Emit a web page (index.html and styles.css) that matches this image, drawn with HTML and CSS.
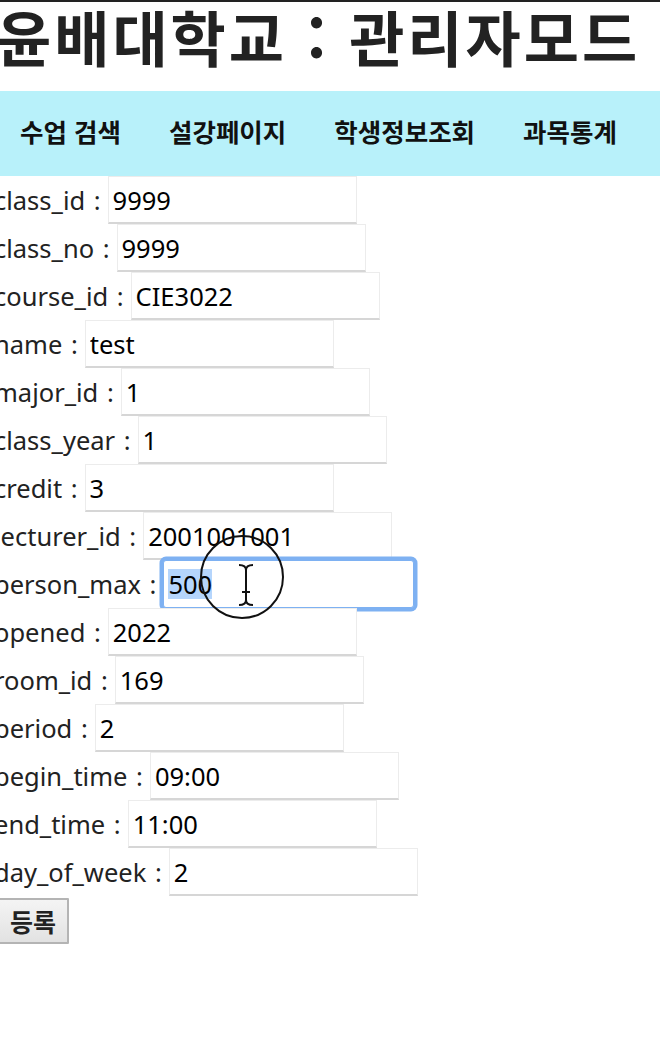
FILE: index.html
```html
<!DOCTYPE html>
<html lang="ko">
<head>
<meta charset="utf-8">
<title>윤배대학교 : 관리자모드</title>
<link rel="stylesheet" href="styles.css">
</head>
<body>
<div class="page">
  <h1 class="title">윤배대학교 : 관리자모드</h1>
  <nav class="nav">
    <a class="nav-item">수업 검색</a>
    <a class="nav-item">설강페이지</a>
    <a class="nav-item">학생정보조회</a>
    <a class="nav-item">과목통계</a>
  </nav>
  <form class="form">
    <div class="row"><label class="label">class_id :</label><input class="field" value="9999"></div>
    <div class="row"><label class="label">class_no :</label><input class="field" value="9999"></div>
    <div class="row"><label class="label">course_id :</label><input class="field" value="CIE3022"></div>
    <div class="row"><label class="label">name :</label><input class="field" value="test"></div>
    <div class="row"><label class="label">major_id :</label><input class="field" value="1"></div>
    <div class="row"><label class="label">class_year :</label><input class="field" value="1"></div>
    <div class="row"><label class="label">credit :</label><input class="field" value="3"></div>
    <div class="row"><label class="label">lecturer_id :</label><input class="field" value="2001001001"></div>
    <div class="row"><label class="label">person_max :</label><div class="field focused"><span class="sel">500</span></div></div>
    <div class="row"><label class="label">opened :</label><input class="field over" value="2022"></div>
    <div class="row"><label class="label">room_id :</label><input class="field" value="169"></div>
    <div class="row"><label class="label">period :</label><input class="field" value="2"></div>
    <div class="row"><label class="label">begin_time :</label><input class="field" value="09:00"></div>
    <div class="row"><label class="label">end_time :</label><input class="field" value="11:00"></div>
    <div class="row"><label class="label">day_of_week :</label><input class="field" value="2"></div>
    <button type="button" class="submit">등록</button>
  </form>
  <svg class="cursor-lens" width="86" height="86" viewBox="0 0 86 86">
    <circle cx="43" cy="43" r="41" fill="none" stroke="#111" stroke-width="2"/>
    <path d="M40 31 q7 0 7 5 q0 -5 7 -5 M47 36 V66 M40 71 q7 0 7 -5 q0 5 7 5 M43 58 H51" fill="none" stroke="#111" stroke-width="2"/>
  </svg>
</div>
</body>
</html>
```
FILE: styles.css
```css
* { box-sizing: border-box; }
html, body { margin: 0; padding: 0; background: #fff; }
body {
  font-family: "Noto Sans", "Noto Sans CJK KR", sans-serif;
  color: #222;
  overflow: hidden;
}
.page {
  position: relative;
  width: 660px;
  height: 1056px;
  border-top: 2px solid #222;
  overflow: hidden;
}
.title {
  margin: 0 0 0 -4px;
  height: 89px;
  font-family: "Noto Sans CJK KR", sans-serif;
  font-size: 60px;
  font-weight: 700;
  line-height: 68px;
  letter-spacing: 3px;
  white-space: nowrap;
  color: #222;
}
.nav {
  display: flex;
  align-items: center;
  gap: 48px;
  height: 85px;
  padding: 0 0 6px 20px;
  background: #b8f1fa;
}
.nav-item {
  font-family: "Noto Sans CJK KR", sans-serif;
  font-size: 25.5px;
  font-weight: 700;
  color: #111;
  white-space: nowrap;
}
.form {
  margin-left: -6px;
  display: flex;
  flex-direction: column;
  align-items: flex-start;
}
.row {
  display: flex;
  align-items: center;
  height: 48px;
  white-space: nowrap;
}
.label {
  font-size: 25.5px;
  color: #222;
  padding-right: 7px;
  word-spacing: 2px;
}
.field {
  width: 249px;
  height: 48px;
  padding: 0 4px;
  border: 1px solid #ececec;
  border-bottom: 2px solid #d6d6d6;
  background: #fff;
  font-family: "Noto Sans", "Noto Sans CJK KR", sans-serif;
  font-size: 25.5px;
  color: #000;
  display: flex;
  align-items: center;
}
.over { position: relative; }
.focused {
  width: 251px;
  border: 1px solid #7eb1f2;
  box-shadow: 0 0 0 3.5px #7eb1f2;
  border-radius: 3px;
}
.sel {
  background: #b5d5fc;
  line-height: 30px;
}
.submit {
  margin-top: 2px;
  margin-left: 3px;
  height: 46px;
  padding: 0 11px;
  font-family: "Noto Sans CJK KR", sans-serif;
  font-size: 25px;
  font-weight: 700;
  color: #222;
  background: linear-gradient(#f4f4f4, #e2e2e2);
  border: 2px solid #b4b4b4;
  border-radius: 1px;
}
.cursor-lens {
  position: absolute;
  left: 199px;
  top: 532px;
}
```
